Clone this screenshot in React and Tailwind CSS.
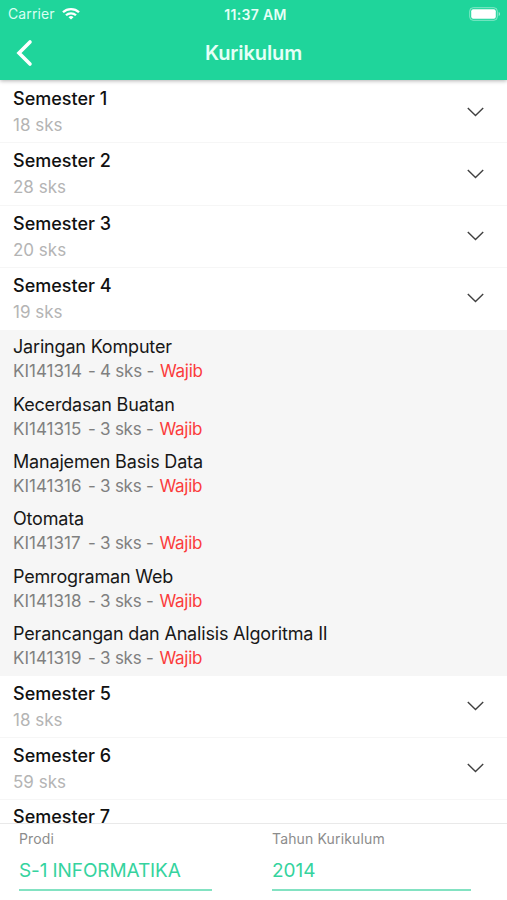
import React from "react";

const firstSemesters = [
  ["Semester 1", "18 sks"],
  ["Semester 2", "28 sks"],
  ["Semester 3", "20 sks"],
  ["Semester 4", "19 sks"],
];

const courses = [
  ["Jaringan Komputer", "KI141314", "4 sks"],
  ["Kecerdasan Buatan", "KI141315", "3 sks"],
  ["Manajemen Basis Data", "KI141316", "3 sks"],
  ["Otomata", "KI141317", "3 sks"],
  ["Pemrograman Web", "KI141318", "3 sks"],
  ["Perancangan dan Analisis Algoritma II", "KI141319", "3 sks"],
];

const lastSemesters = [
  ["Semester 5", "18 sks"],
  ["Semester 6", "59 sks"],
];

function Title({ children }) {
  return <div className="text-[18px] font-medium leading-[26px] text-[#111]">{children}</div>;
}

function SemesterRow({ title, credits, open }) {
  return (
    <div
      className={`flex h-[62.3px] shrink-0 items-start justify-between border-b pl-[13px] pr-[23px] ${
        open ? "border-transparent" : "border-[#f6f6f6]"
      }`}
    >
      <div className="pt-[5px]">
        <Title>{title}</Title>
        <div className="text-[17px] leading-[26px] text-[#b4b4b4]">{credits}</div>
      </div>
      <svg className="mt-[25.5px] h-[10px] w-[17px]" viewBox="0 0 17 10" fill="none" stroke="#404040" strokeWidth="1.4">
        <path d="M0.8 0.9 8.5 8.5 16.2 0.9" />
      </svg>
    </div>
  );
}

function CourseRow({ name, code, credits }) {
  return (
    <div className="h-[57.4px] shrink-0 pl-[13px] pt-[5px]">
      <div className="text-[18px] leading-[24px] tracking-[-0.18px] text-[#181818]">{name}</div>
      <div className="flex text-[17px] leading-[24px] text-[#808080]">
        <span className="w-[75px]">{code}</span>
        <span className="tracking-[-0.25px]">- {credits} -</span>
        <span className="ml-[6px] tracking-[-0.3px] text-[#fb3c3c]">Wajib</span>
      </div>
    </div>
  );
}

export default function App() {
  return (
    <div className="flex h-[900px] w-[507px] flex-col overflow-hidden bg-white font-['Inter',sans-serif]">
      <header className="relative z-10 h-20 shrink-0 bg-[#1fd59b] text-white shadow-[0_1px_4px_rgba(0,0,0,0.3)]">
        <div className="grid h-[27px] grid-cols-3 items-center pl-2 pr-[6px] text-[14px]">
          <div className="flex items-center gap-[7px] text-[#d9fff2]">
            <span className="tracking-[0.1px]">Carrier</span>
            <svg className="h-[12px] w-[18px]" viewBox="0 0 18 13" preserveAspectRatio="none" fill="none" stroke="white" strokeWidth="2.3">
              <path d="M1 4.6a11.3 11.3 0 0 1 16 0" />
              <path d="M4 7.9a7.1 7.1 0 0 1 10 0" />
              <path d="M9 12.5 6.5 10a3.5 3.5 0 0 1 5 0Z" fill="white" stroke="none" />
            </svg>
          </div>
          <div className="pl-[2px] pt-px text-center text-[14px] font-semibold tracking-[0.35px] text-[#e6fff7]">11:37 AM</div>
          <svg className="h-[14px] w-[32px] justify-self-end" viewBox="0 0 32 14" fill="none">
            <rect x="0.7" y="0.7" width="27.6" height="12.6" rx="3.5" stroke="white" strokeOpacity="0.45" />
            <rect x="2.2" y="2.2" width="24.6" height="9.6" rx="2" fill="white" />
            <path d="M29.7 5v4c.8-.3 1.3-1.1 1.3-2s-.5-1.7-1.3-2Z" fill="white" fillOpacity="0.55" />
          </svg>
        </div>
        <div className="grid h-[51px] grid-cols-[60px_1fr_60px] items-center">
          <svg className="ml-4 h-[28px] w-[17px]" viewBox="0 0 17 28" fill="none" stroke="white" strokeWidth="3.6" strokeLinecap="round">
            <path d="M14 3 3 14 14 25" />
          </svg>
          <h1 className="text-center text-[20px] font-semibold tracking-[-0.1px] text-[#e6fff7]">Kurikulum</h1>
        </div>
      </header>

      <main className="flex min-h-0 flex-1 flex-col overflow-hidden pt-[1px]">
        {firstSemesters.map(([title, credits]) => (
          <SemesterRow key={title} title={title} credits={credits} open={title === "Semester 4"} />
        ))}
        <div className="shrink-0 bg-[#f6f6f6] pb-[1px]">
          {courses.map(([name, code, credits]) => (
            <CourseRow key={code} name={name} code={code} credits={credits} />
          ))}
        </div>
        {lastSemesters.map(([title, credits]) => (
          <SemesterRow key={title} title={title} credits={credits} />
        ))}
        <div className="shrink-0 pl-[13px] pt-[4px]">
          <Title>Semester 7</Title>
        </div>
      </main>

      <footer className="relative flex h-[77px] shrink-0 border-t border-[#e9e9e9] bg-white pl-[19px]">
        <div className="w-[253px]">
          <div className="pt-[5px] text-[14px] leading-5 tracking-[0.15px] text-[#8c8c8c]">Prodi</div>
          <div className="mt-[7px] h-[35px] w-[193px] border-b-2 border-[#83e2c2] text-[19px] leading-[30px] tracking-[-0.1px] text-[#35d39e]">
            S-1 INFORMATIKA
          </div>
        </div>
        <div>
          <div className="pt-[5px] text-[14px] leading-5 tracking-[0.15px] text-[#8c8c8c]">Tahun Kurikulum</div>
          <div className="mt-[7px] h-[35px] w-[199px] border-b-2 border-[#83e2c2] text-[19px] leading-[30px] text-[#35d39e]">
            2014
          </div>
        </div>
      </footer>
    </div>
  );
}
